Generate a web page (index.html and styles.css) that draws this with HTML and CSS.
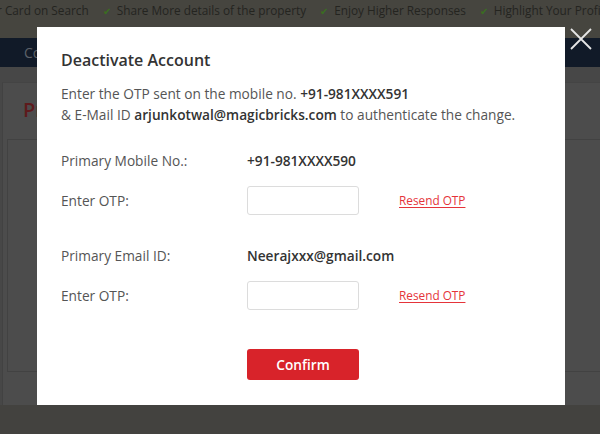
FILE: index.html
```html
<!DOCTYPE html>
<html>
<head>
<meta charset="utf-8">
<link rel="stylesheet" href="styles.css">
</head>
<body>
<div class="page">
  <div class="topbar">
    <span class="perk first">r Card on Search</span>
    <span class="perk"><span class="tick">✔</span>Share More details of the property</span>
    <span class="perk"><span class="tick">✔</span>Enjoy Higher Responses</span>
    <span class="perk"><span class="tick">✔</span>Highlight Your Profile</span>
  </div>
  <div class="nav"><span class="nav-item">Contact</span></div>
  <div class="main">
    <div class="strip"></div>
    <div class="panel">
      <h2 class="panel-title">Profile</h2>
      <div class="panel-box"></div>
    </div>
  </div>
  <div class="footer"></div>
</div>

<div class="modal">
  <h1 class="modal-title">Deactivate Account</h1>
  <p class="intro">Enter the OTP sent on the mobile no. <b>+91-981XXXX591</b><br>&amp; E-Mail ID <b>arjunkotwal@magicbricks.com</b> to authenticate the change.</p>

  <div class="group">
    <div class="label">Primary Mobile No.:</div>
    <div class="value">+91-981XXXX590</div>
    <div class="label">Enter OTP:</div>
    <input class="otp" type="text">
    <a class="resend" href="#">Resend OTP</a>
  </div>

  <div class="group second">
    <div class="label">Primary Email ID:</div>
    <div class="value">Neerajxxx@gmail.com</div>
    <div class="label">Enter OTP:</div>
    <input class="otp" type="text">
    <a class="resend" href="#">Resend OTP</a>
  </div>

  <div class="actions">
    <button class="confirm" type="button">Confirm</button>
  </div>
</div>

<button class="close" type="button" aria-label="Close">
  <svg width="24" height="24" viewBox="0 0 24 24"><path d="M2 2 L22 22 M22 2 L2 22" stroke="#e6e6e6" stroke-width="1.8" fill="none"/></svg>
</button>
</body>
</html>
```

FILE: styles.css
```css
* { box-sizing: border-box; }
html, body { margin: 0; height: 100%; }
body {
  font-family: "Open Sans", "Liberation Sans", sans-serif;
  background: #43423f;
  overflow: hidden;
}

.page {
  display: flex;
  flex-direction: column;
  height: 434px;
}

.topbar {
  height: 38px;
  background: #46453f;
  display: flex;
  align-items: flex-start;
  padding-top: 2px;
  gap: 14px;
  font-size: 11.8px;
  color: #24241f;
  white-space: nowrap;
  overflow: hidden;
}
.perk.first { margin-left: -3px; }
.tick { color: #3a6e21; font-size: 10px; margin-right: 6px; }

.nav {
  height: 29px;
  background: #111a28;
  display: flex;
  align-items: center;
  padding-left: 24px;
}
.nav-item { color: #5d6168; font-size: 14px; }

.main {
  flex: 1;
  background: #474747;
  display: flex;
  flex-direction: column;
}
.strip { height: 15px; background: #474747; }
.panel {
  flex: 1;
  margin-left: 2px;
  background: #4c4c4c;
  border-left: 1px solid #424242;
  border-top: 1px solid #444;
  display: flex;
  flex-direction: column;
  padding: 14px 0 33px 4px;
}
.panel-title {
  margin: 0 0 16px 16px;
  font-size: 20px;
  font-weight: 600;
  color: #5e1a1c;
  line-height: 26px;
}
.panel-box {
  flex: 1;
  border: 1px solid #424242;
  border-right: none;
}

.footer { height: 29px; background: #43423f; }

/* modal */
.modal {
  position: absolute;
  left: 37px;
  top: 27px;
  width: 528px;
  height: 378px;
  background: #fff;
  padding: 21px 24px 0;
  color: #555;
}
.modal-title {
  margin: 0;
  font-size: 16px;
  font-weight: 600;
  line-height: 24px;
  color: #333;
}
.intro {
  margin: 11px 0 0;
  font-size: 13.7px;
  line-height: 21px;
}
.intro b { font-weight: 600; color: #333; }

.group {
  display: grid;
  grid-template-columns: 186px 112px auto;
  align-items: center;
  row-gap: 15px;
  margin-top: 25px;
  font-size: 13.7px;
  line-height: 21px;
}
.group.second { margin-top: 30px; }
.label { color: #555; }
.value { color: #333; font-weight: 600; grid-column: span 2; }
.otp {
  width: 112px;
  height: 29px;
  border: 1px solid #dcdcdc;
  border-radius: 3px;
  font: inherit;
  outline: none;
}
.resend {
  margin-left: 40px;
  color: #e5343a;
  font-size: 11.8px;
  text-decoration: underline;
  text-underline-offset: 2px;
}

.actions { margin-top: 39px; padding-left: 186px; }
.confirm {
  width: 112px;
  height: 31px;
  border: none;
  border-radius: 3px;
  background: #d8232a;
  color: #fff;
  font-family: inherit;
  font-size: 13.7px;
  font-weight: 600;
}

.close {
  position: absolute;
  left: 569px;
  top: 27px;
  width: 24px;
  height: 24px;
  padding: 0;
  border: none;
  background: transparent;
}
.close svg { display: block; }
```
